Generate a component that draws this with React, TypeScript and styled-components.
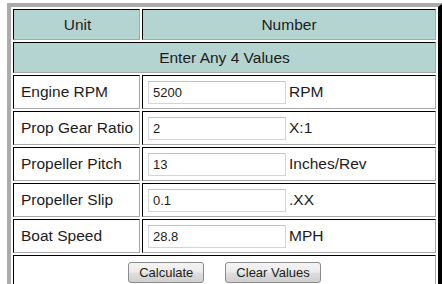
import React from "react";
import styled, { createGlobalStyle } from "styled-components";

const Global = createGlobalStyle`
  body {
    margin: 0;
    background: #ffffff;
    font-family: "Liberation Sans", Arial, sans-serif;
    color: #1c1c1c;
  }
`;

const Page = styled.div`
  padding: 3px 0 0 7px;
  overflow: hidden;
  height: 284px;
`;

const Table = styled.table`
  table-layout: fixed;
  border-collapse: separate;
  border-spacing: 2px;
  border-style: solid;
  border-width: 4px 5px 4px 4px;
  border-color: #ababab #000000 #000000 #ababab;
  width: 436px;
`;

const Cell = styled.td<{ $head?: boolean; $h: number }>`
  box-sizing: border-box;
  height: ${(p) => p.$h}px;
  padding: 0 5px;
  border: 1px solid;
  border-color: #000000 #a8a8a8 #a8a8a8 #000000;
  background: ${(p) => (p.$head ? "#b4d4d2" : "#ffffff")};
  font-size: 15.5px;
  font-weight: 400;
  text-align: ${(p) => (p.$head ? "center" : "left")};
  vertical-align: middle;
  white-space: nowrap;
  overflow: hidden;
`;

const LabelCell = styled(Cell)`
  width: 127px;
  padding-left: 7px;
`;

const Field = styled.div`
  display: flex;
  align-items: center;
  gap: 3px;
`;

const Input = styled.input`
  box-sizing: border-box;
  width: 138px;
  height: 23px;
  margin: 0;
  padding: 1px 4px 0;
  border: 1px solid #d4d4d4;
  border-top-color: #c2c2c2;
  font-family: "Liberation Sans", Arial, sans-serif;
  font-size: 13px;
  color: #1c1c1c;
  outline: none;
`;

const ButtonBar = styled.div`
  display: flex;
  justify-content: center;
  gap: 21px;
  padding-top: 6px;
  height: 40px;
  align-items: flex-start;
`;

const Button = styled.button`
  height: 21px;
  padding: 0 10px;
  border: 1px solid #8c8c8c;
  border-radius: 3px;
  background: linear-gradient(#f4f4f4 0%, #ececec 45%, #dddddd 55%, #cfcfcf 100%);
  font-family: "Liberation Sans", Arial, sans-serif;
  font-size: 13px;
  color: #1c1c1c;
`;

const rows = [
  { label: "Engine RPM", value: "5200", unit: "RPM" },
  { label: "Prop Gear Ratio", value: "2", unit: "X:1" },
  { label: "Propeller Pitch", value: "13", unit: "Inches/Rev" },
  { label: "Propeller Slip", value: "0.1", unit: ".XX" },
  { label: "Boat Speed", value: "28.8", unit: "MPH" },
];

export default function App() {
  return (
    <Page>
      <Global />
      <Table>
        <tbody>
          <tr>
            <LabelCell as="th" $head $h={31}>
              Unit
            </LabelCell>
            <Cell as="th" $head $h={31}>
              Number
            </Cell>
          </tr>
          <tr>
            <Cell $head $h={31} colSpan={2}>
              Enter Any 4 Values
            </Cell>
          </tr>
          {rows.map((r) => (
            <tr key={r.label}>
              <LabelCell $h={34}>{r.label}</LabelCell>
              <Cell $h={34}>
                <Field>
                  <Input defaultValue={r.value} />
                  <span>{r.unit}</span>
                </Field>
              </Cell>
            </tr>
          ))}
          <tr>
            <Cell $h={40} colSpan={2}>
              <ButtonBar>
                <Button>Calculate</Button>
                <Button>Clear Values</Button>
              </ButtonBar>
            </Cell>
          </tr>
        </tbody>
      </Table>
    </Page>
  );
}
